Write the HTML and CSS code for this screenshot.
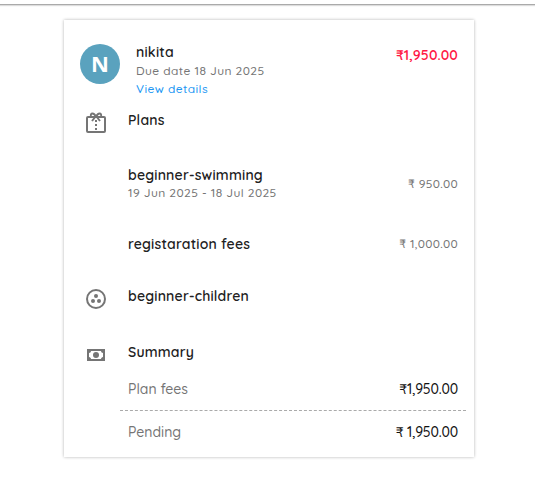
FILE: index.html
```html
<!DOCTYPE html>
<html lang="en">
<head>
    <meta charset="UTF-8">
    <meta name="viewport" content="width=device-width, initial-scale=1.0">
    <title>Invoice</title>
    <link rel="stylesheet" href="styles.css">
</head>
<body>
    <div class="top-bar"></div>

    <div class="invoice-card">
        <div class="member">
            <div class="avatar">N</div>
            <div class="member-info">
                <div class="title">nikita</div>
                <div class="sub">Due date 18 Jun 2025</div>
                <a class="sub link">View details</a>
            </div>
            <div class="amount due-amount">₹1,950.00</div>
        </div>

        <div class="section plans">
            <svg class="icon" viewBox="0 0 24 24">
                <rect x="3" y="6" width="18" height="15" rx="1"/>
                <path d="M12 6C10 1 6 2 7 5M12 6c2-5 6-4 5-1M12 5l-4 5M12 5l4 5"/>
                <path d="M12 9v11" stroke-dasharray="2 2"/>
            </svg>
            <div class="title">Plans</div>
        </div>

        <div class="item swimming">
            <div>
                <div class="title">beginner-swimming</div>
                <div class="sub period">19 Jun 2025 - 18 Jul 2025</div>
            </div>
            <div class="item-amount">₹ 950.00</div>
        </div>

        <div class="item fees">
            <div class="title">registaration fees</div>
            <div class="item-amount">₹ 1,000.00</div>
        </div>

        <div class="section children">
            <svg class="icon" viewBox="0 0 24 24">
                <circle cx="12" cy="12" r="9"/>
                <g class="solid">
                    <circle cx="12" cy="9" r="2"/>
                    <circle cx="9" cy="14" r="2"/>
                    <circle cx="15" cy="14" r="2"/>
                </g>
            </svg>
            <div class="title">beginner-children</div>
        </div>

        <div class="section summary">
            <svg class="icon" viewBox="0 0 24 24">
                <path class="solid" fill-rule="evenodd" d="M3 6h18v12H3zM7 8c0 1-1 2-2 2v4c1 0 2 1 2 2h10c0-1 1-2 2-2v-4c-1 0-2-1-2-2z"/>
                <circle class="solid" cx="12" cy="12" r="3"/>
            </svg>
            <div class="title">Summary</div>
        </div>

        <div class="total plan-total">
            <span class="label">Plan fees</span>
            <span class="amount">₹1,950.00</span>
        </div>
        <div class="total pending">
            <span class="label">Pending</span>
            <span class="amount">₹ 1,950.00</span>
        </div>
    </div>
</body>
</html>
```
FILE: styles.css
```css
body {
    margin: 0;
    padding-bottom: 35px;
    background-color: #fff;
    font-family: Quicksand, Lato, sans-serif;
    font-weight: 500;
    color: #212121;
}

.top-bar {
    height: 4px;
    border-bottom: 1px solid #aaa;
    box-shadow: 0 1px 1px #ddd;
}

.invoice-card {
    width: 410px;
    height: 437px;
    margin: 15px 0 0 64px;
    box-shadow: 0 0 3px rgba(0,0,0,0.3);
}

.member {
    display: flex;
    height: 84px;
    padding: 16px 16px 0;
    box-sizing: border-box;
}

.avatar {
    width: 40px;
    height: 40px;
    margin-top: 8px;
    border-radius: 50%;
    background-color: #5aa2be;
    color: #fff;
    font: bold 22px/39px "Open Sans", sans-serif;
    text-align: center;
}

.member-info {
    flex: 1;
    margin-left: 16px;
    padding-top: 6px;
}

.title {
    font-size: 14px;
    font-weight: 600;
    line-height: 20px;
    letter-spacing: 0.2px;
    white-space: nowrap;
}

.sub {
    display: block;
    font-size: 12px;
    line-height: 18px;
    letter-spacing: 0.4px;
    color: #757575;
    white-space: nowrap;
}

.link {
    color: #2196f3;
}

.period {
    line-height: 16px;
}

.amount {
    font-size: 14px;
    line-height: 20px;
    letter-spacing: -0.15px;
    color: #111;
}

.due-amount {
    margin-top: 9px;
    letter-spacing: 0.1px;
    color: #ff1744;
    font-weight: 600;
}

.section {
    display: flex;
    padding-left: 20px;
}

.icon {
    width: 24px;
    height: 24px;
    margin: 1px 20px 0 0;
    fill: none;
    stroke: #757575;
    stroke-width: 2;
}

.icon .solid {
    fill: #757575;
    stroke: none;
}

.plans {
    height: 61px;
    padding-top: 6px;
    box-sizing: border-box;
}

.item {
    display: flex;
    justify-content: space-between;
    align-items: center;
    padding: 0 16px 0 64px;
}

.swimming {
    height: 36px;
}

.swimming .item-amount {
    margin-top: 1px;
    margin-bottom: 0;
}

.fees {
    height: 20px;
    margin-top: 33px;
}

.item-amount {
    font-size: 12px;
    letter-spacing: 0.3px;
    margin-bottom: 1px;
    color: #757575;
}

.children {
    height: 56px;
    margin-top: 32px;
}

.summary {
    height: 37px;
}

.total {
    display: flex;
    justify-content: space-between;
    align-items: center;
    margin: 0 8px 0 56px;
    padding: 0 8px;
    font-size: 14px;
}

.plan-total {
    height: 19px;
    padding-bottom: 12px;
    border-bottom: 1px dashed #aaa;
}

.pending {
    height: 42px;
}

.label {
    color: #757575;
}
```
